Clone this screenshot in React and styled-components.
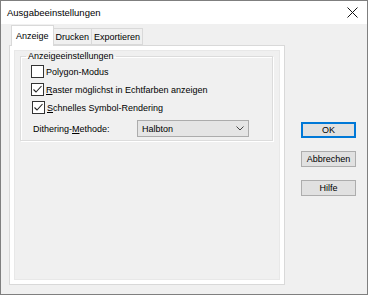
import React from "react";
import styled, { createGlobalStyle } from "styled-components";

const Global = createGlobalStyle`
  html, body { margin: 0; padding: 0; background: #f0f0f0; }
  * { box-sizing: border-box; }
  body { font-family: "Liberation Sans", Arial, sans-serif; font-size: 9px; color: #000; }
`;

const Window = styled.div`
  width: 368px;
  height: 295px;
  border: 1px solid #7f7f7f;
  display: flex;
  flex-direction: column;
  background: #f0f0f0;
`;

const TitleBar = styled.div`
  height: 23px;
  background: #fff;
  display: flex;
  align-items: center;
  justify-content: space-between;
  padding: 0 9px 0 6px;
  font-size: 9.5px;
`;

const Body = styled.div`
  flex: 1;
  display: flex;
  padding: 0 0 0 8px;
`;

const TabArea = styled.div`
  width: 276px;
  display: flex;
  flex-direction: column;
`;

const TabStrip = styled.div`
  display: flex;
  align-items: flex-end;
  height: 21px;
  padding-left: 2px;
  position: relative;
  z-index: 1;
`;

const Tab = styled.div`
  height: ${(p) => (p.$active ? "21px" : "17px")};
  padding: 0 ${(p) => (p.$active ? "4px" : "2px")};
  margin-bottom: ${(p) => (p.$active ? "-1px" : "0")};
  margin-left: ${(p) => (p.$active ? "0" : "-1px")};
  display: flex;
  align-items: center;
  background: ${(p) => (p.$active ? "#fff" : "#f0f0f0")};
  border: 1px solid #d9d9d9;
  border-bottom: ${(p) => (p.$active ? "none" : "1px solid #d9d9d9")};
  &:first-child { margin-left: 0; }
`;

const Panel = styled.div`
  height: 240px;
  border: 1px solid #d9d9d9;
  background: #fff;
  padding: 4px;
`;

const Page = styled.div`
  height: 100%;
  background: #f0f0f0;
  border: 1px solid #e8e8e8;
  padding: 0 6px 0 5px;
`;

const GroupBox = styled.fieldset`
  margin: 0;
  border: 1px solid #dcdcdc;
  box-shadow: inset 1px 1px 0 #fff, 1px 1px 0 #fff;
  padding: 4px 0 3px 10px;
  display: flex;
  flex-direction: column;
  gap: 5px;
  legend { padding: 0 2px; margin-left: -5px; }
`;

const CheckRow = styled.label`
  display: flex;
  align-items: center;
  gap: 2px;
  height: 13px;
  margin-left: ${(p) => (p.$indent ? "1px" : "0")};
`;

const Box = styled.span`
  width: 13px;
  height: 13px;
  border: 1px solid #333;
  background: #fff;
  display: flex;
  align-items: center;
  justify-content: center;
`;

const SelectRow = styled.div`
  display: flex;
  align-items: center;
  margin-top: 1px;
  padding-left: 2px;
`;

const SelectLabel = styled.span`
  width: 104px;
`;

const Select = styled.div`
  width: 112px;
  height: 17px;
  background: #e5e5e5;
  border: 1px solid #acacac;
  display: flex;
  align-items: center;
  justify-content: space-between;
  padding: 0 4px;
`;

const ButtonCol = styled.div`
  display: flex;
  flex-direction: column;
  gap: 13px;
  padding: 98px 0 0 16px;
`;

const Button = styled.div`
  width: 55px;
  height: 16px;
  background: #e1e1e1;
  border: 1px solid ${(p) => (p.$default ? "#0078d7" : "#adadad")};
  box-shadow: ${(p) => (p.$default ? "inset 0 0 0 1px #0078d7" : "none")};
  display: flex;
  align-items: center;
  justify-content: center;
`;

const Check = () => (
  <svg width="11" height="11" viewBox="0 0 11 11">
    <path d="M1.5 5.5 L4 8 L9.5 2" fill="none" stroke="#222" strokeWidth="1.1" />
  </svg>
);

export default function App() {
  return (
    <>
      <Global />
      <Window>
        <TitleBar>
          <span>Ausgabeeinstellungen</span>
          <svg width="11" height="11" viewBox="0 0 11 11">
            <path d="M0.5 0.5 L10.5 10.5 M10.5 0.5 L0.5 10.5" stroke="#111" strokeWidth="1" />
          </svg>
        </TitleBar>
        <Body>
          <TabArea>
            <TabStrip>
              <Tab $active>Anzeige</Tab>
              <Tab>Drucken</Tab>
              <Tab>Exportieren</Tab>
            </TabStrip>
            <Panel>
              <Page>
                <GroupBox>
                  <legend>Anzeigeeinstellungen</legend>
                  <CheckRow>
                    <Box />
                    <span>Poly<u>g</u>on-Modus</span>
                  </CheckRow>
                  <CheckRow>
                    <Box><Check /></Box>
                    <span><u>R</u>aster möglichst in Echtfarben anzeigen</span>
                  </CheckRow>
                  <CheckRow $indent>
                    <Box><Check /></Box>
                    <span><u>S</u>chnelles Symbol-Rendering</span>
                  </CheckRow>
                  <SelectRow>
                    <SelectLabel>Dithering-<u>M</u>ethode:</SelectLabel>
                    <Select>
                      <span>Halbton</span>
                      <svg width="8" height="5" viewBox="0 0 8 5">
                        <path d="M0.5 0.5 L4 4 L7.5 0.5" fill="none" stroke="#444" strokeWidth="1" />
                      </svg>
                    </Select>
                  </SelectRow>
                </GroupBox>
              </Page>
            </Panel>
          </TabArea>
          <ButtonCol>
            <Button $default>OK</Button>
            <Button>Abbrechen</Button>
            <Button>Hilfe</Button>
          </ButtonCol>
        </Body>
      </Window>
    </>
  );
}
